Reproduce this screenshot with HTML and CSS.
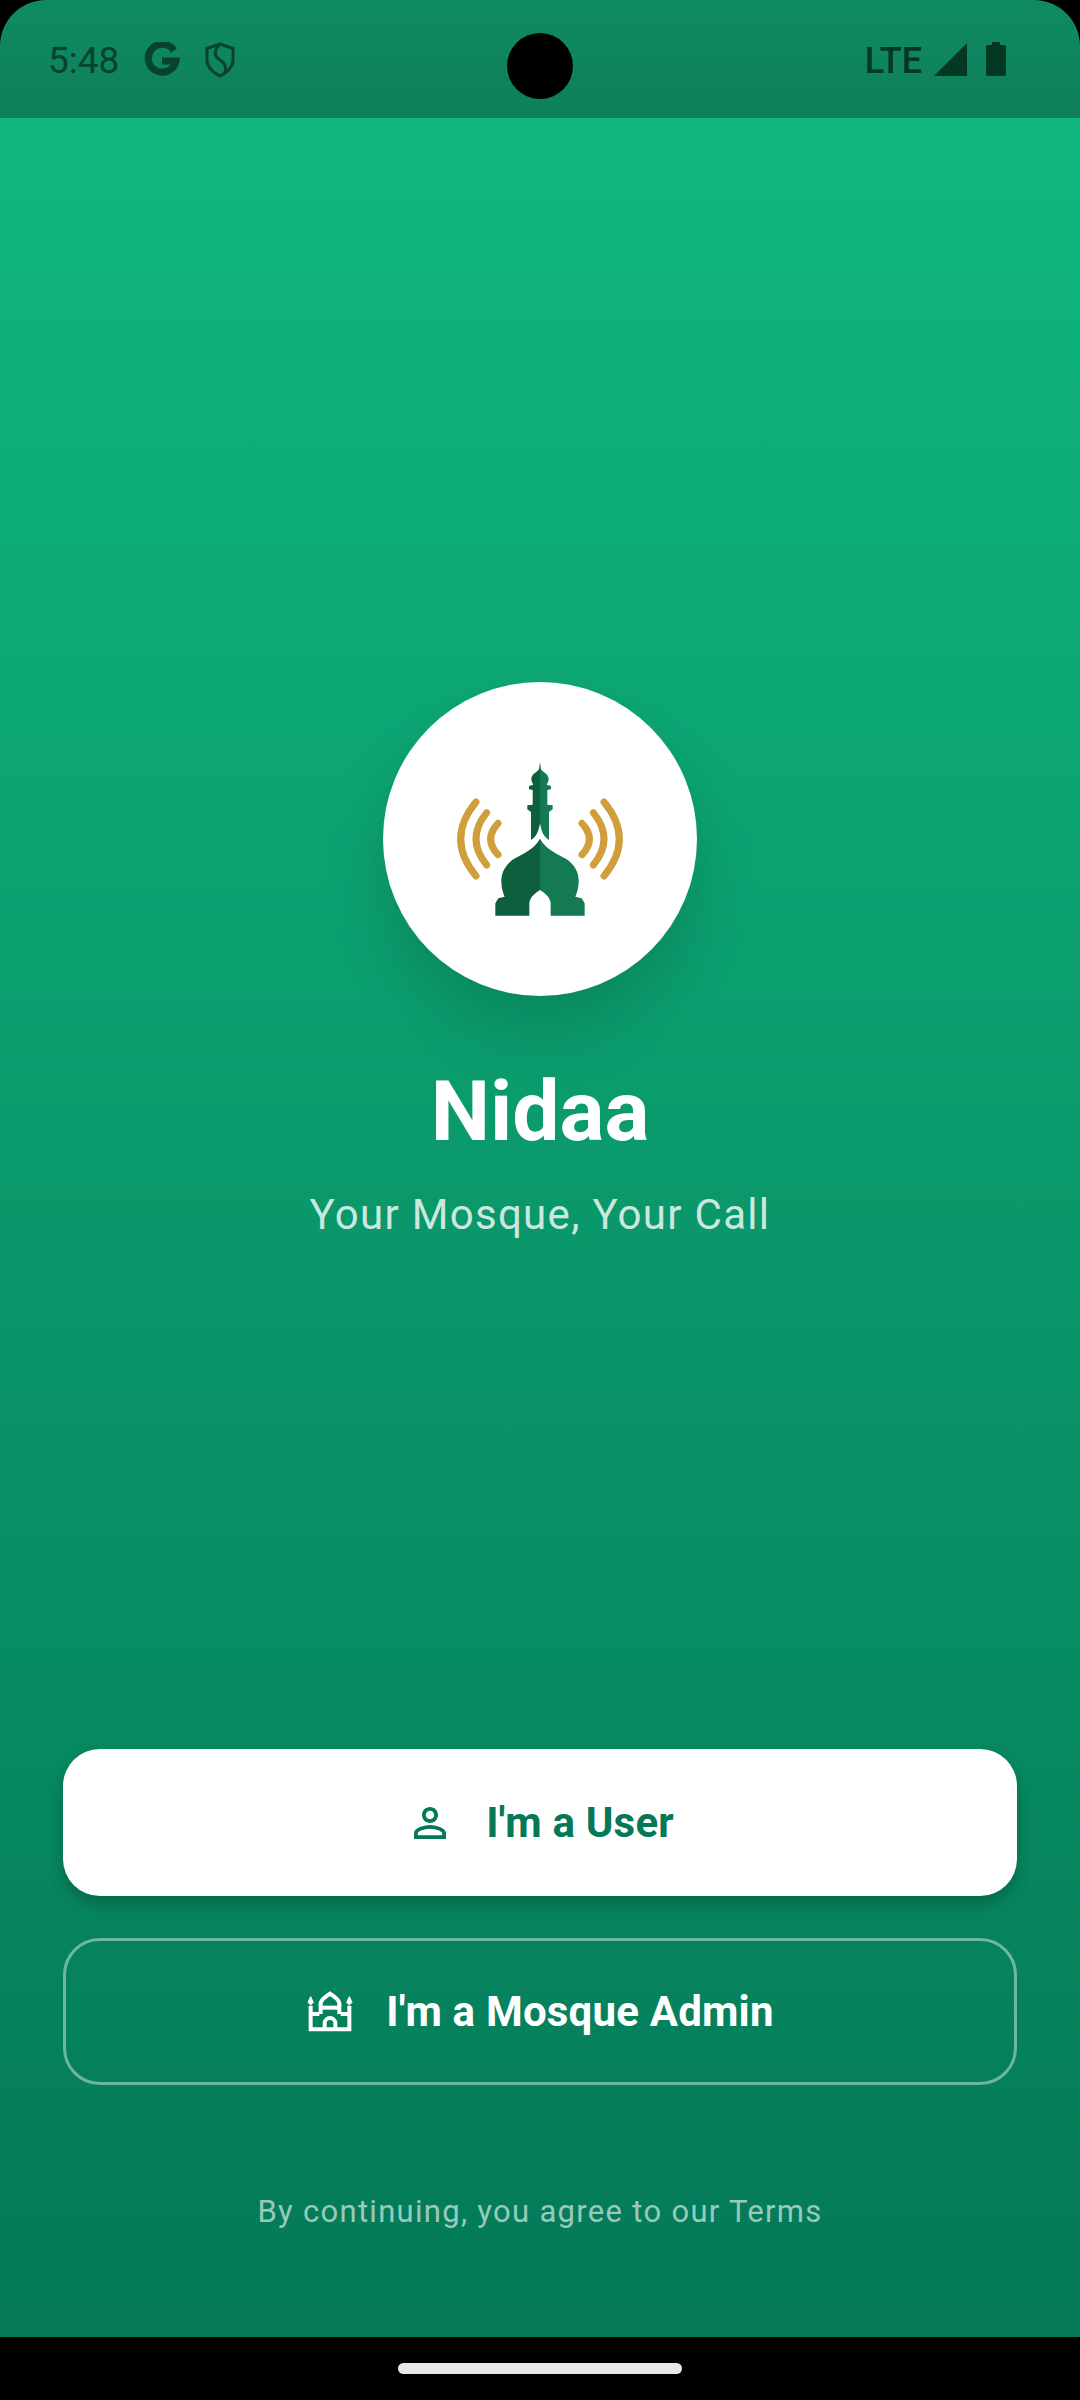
FILE: index.html
```html
<!DOCTYPE html>
<html lang="en">
<head>
  <meta charset="UTF-8">
  <title>Nidaa</title>
  <link rel="stylesheet" href="styles.css">
</head>
<body>
  <div class="screen">
    <div class="statusbar">
      <span class="time">5:48</span>
      <svg class="ic-g" width="36" height="36" viewBox="0 0 36 36"><path d="M30 8.5A14 14 0 1 0 32 19H18" fill="none" stroke="#07432d" stroke-width="7"/></svg>
      <svg class="ic-shield" width="30" height="36" viewBox="0 0 30 36"><path d="M15 2 L28 6.5 V18 C28 25 22 31 15 34 C8 31 2 25 2 18 V6.5 Z" fill="none" stroke="#07432d" stroke-width="3" stroke-linejoin="round"/><path d="M14 3 C8 10 10 15 15 18 C20 21 22 25 20 31" fill="none" stroke="#07432d" stroke-width="3"/></svg>
      <span class="camera"></span>
      <span class="lte">LTE</span>
      <svg class="ic-signal" width="33" height="33" viewBox="0 0 33 33"><path d="M33 0V33H0Z" fill="#053823"/></svg>
      <svg class="ic-battery" width="20" height="34" viewBox="0 0 20 34"><path d="M6 0H14V3H18A2 2 0 0 1 20 5V32A2 2 0 0 1 18 34H2A2 2 0 0 1 0 32V5A2 2 0 0 1 2 3H6Z" fill="#053823"/></svg>
    </div>

    <main class="main">
      <div class="logo">
        <svg width="220" height="190" viewBox="0 12 660 570">
          <g fill="none" stroke="#d09e3a" stroke-width="21" stroke-linecap="round">
            <path d="M138 186Q46 297 138 408"/>
            <path d="M170 218Q106 297 170 375"/>
            <path d="M204 250Q160 297 204 344"/>
            <path d="M522 186Q614 297 522 408"/>
            <path d="M490 218Q554 297 490 375"/>
            <path d="M456 250Q500 297 456 344"/>
          </g>
          <path fill="#0d5f3e" d="M330 66L327 88C320 98 304 102 304 118C304 125 308 130 310 134L297 138V148L308 150V194L292 196V208L303 216V300C318 292 326 275 330 250Z"/>
          <path fill="#147a52" d="M330 66L333 88C340 98 356 102 356 118C356 125 352 130 350 134L363 138V148L352 150V194L368 196V208L357 216V300C342 292 334 275 330 250Z"/>
          <path fill="#0d5f3e" d="M330 296C310 330 280 340 250 358C225 375 213 400 214 425C214 445 220 460 224 470L205 475L196 490V527H298V490C300 470 315 460 330 450Z"/>
          <path fill="#147a52" d="M330 296C350 330 380 340 410 358C435 375 447 400 446 425C446 445 440 460 436 470L455 475L464 490V527H362V490C360 470 345 460 330 450Z"/>
        </svg>
      </div>
      <h1 class="title">Nidaa</h1>
      <p class="tagline">Your Mosque, Your Call</p>

      <div class="actions">
        <button class="btn btn-user">
          <svg width="48" height="48" viewBox="0 0 24 24"><path fill="#047857" d="M12 5.9c1.16 0 2.1.94 2.1 2.1s-.94 2.1-2.1 2.1S9.9 9.16 9.9 8s.94-2.1 2.1-2.1m0 9c2.97 0 6.1 1.46 6.1 2.1v1.1H5.9V17c0-.64 3.13-2.1 6.1-2.1M12 4C9.79 4 8 5.79 8 8s1.79 4 4 4 4-1.79 4-4-1.79-4-4-4zm0 9c-2.67 0-8 1.34-8 4v3h16v-3c0-2.66-5.33-4-8-4z"/></svg>
          I'm a User
        </button>
        <button class="btn btn-admin">
          <svg width="48" height="42" viewBox="78 88 144 126" fill="none" stroke="#fff" stroke-width="12">
            <path d="M92 132V203H208V132"/>
            <path d="M92 105L100 122L92 130L84 122Z" fill="#fff" stroke-width="3"/>
            <path d="M208 105L216 122L208 130L200 122Z" fill="#fff" stroke-width="3"/>
            <path d="M92 157H118M182 157H208"/>
            <path d="M122 157V134C118 118 132 108 150 96C168 108 182 118 178 134V157"/>
            <path d="M120 138H180"/>
            <path d="M134 203V185A16 16 0 0 1 166 185V203"/>
          </svg>
          I'm a Mosque Admin
        </button>
      </div>

      <p class="terms">By continuing, you agree to our Terms</p>
    </main>

    <div class="navbar"><span class="handle"></span></div>
  </div>
</body>
</html>
```

FILE: styles.css
```css
* { box-sizing: border-box; }
html, body { margin: 0; padding: 0; background: #000; }
body { font-family: Roboto, "Noto Sans", sans-serif; }

.screen { width: 1080px; height: 2400px; display: flex; flex-direction: column; }

.statusbar {
  position: relative;
  height: 118px;
  display: flex;
  align-items: center;
  padding: 3px 74px 0 48px;
  background: linear-gradient(#0f8b63, #0e7f5b);
  border-radius: 46px 46px 0 0;
  color: #07432d;
}
.time { font-size: 37px; line-height: 1; margin-right: 25px; }
.ic-g { margin-right: 25px; margin-top: -2px; }
.ic-shield { margin-top: -2px; }
.lte { font-size: 36px; line-height: 1; font-weight: 500; margin-left: auto; margin-right: 12px; color: #053823; }
.ic-signal { margin-right: 19px; margin-top: -3px; }
.ic-battery { margin-top: -3px; }
.camera {
  position: absolute;
  left: 507px;
  top: 33px;
  width: 66px;
  height: 66px;
  border-radius: 50%;
  background: #000;
}

.main {
  flex: 1;
  display: flex;
  flex-direction: column;
  align-items: center;
  padding-top: 564px;
  background: linear-gradient(#10b77f, #047857);
}
.logo {
  width: 314px;
  height: 314px;
  border-radius: 50%;
  background: #fff;
  display: flex;
  align-items: center;
  justify-content: center;
  box-shadow: 0 32px 64px rgba(0,0,0,0.15);
}
.title { margin: 67px 0 0; font-size: 84px; line-height: 98px; font-weight: 700; color: #fff; }
.tagline { margin: 29px 0 0; font-size: 42px; line-height: 50px; letter-spacing: 1.3px; color: rgba(255,255,255,0.8); }

.actions { width: 954px; margin-top: 509px; display: flex; flex-direction: column; gap: 42px; }
.btn {
  height: 147px;
  border-radius: 37px;
  display: flex;
  align-items: center;
  justify-content: center;
  gap: 32px;
  font-family: inherit;
  font-size: 42px;
  font-weight: 700;
  letter-spacing: 0.2px;
}
.btn-user { background: #fff; color: #047857; border: 0; box-shadow: 0 8px 16px rgba(0,0,0,0.22); }
.btn-admin { background: none; color: #fff; border: 3px solid rgba(255,255,255,0.42); }

.terms { margin: 109px 0 0; font-size: 31px; line-height: 36px; letter-spacing: 1.3px; color: rgba(255,255,255,0.6); }

.navbar { height: 63px; background: #000; display: flex; justify-content: center; padding-top: 26px; }
.handle { width: 284px; height: 11px; border-radius: 6px; background: #e8e8e8; }
```
